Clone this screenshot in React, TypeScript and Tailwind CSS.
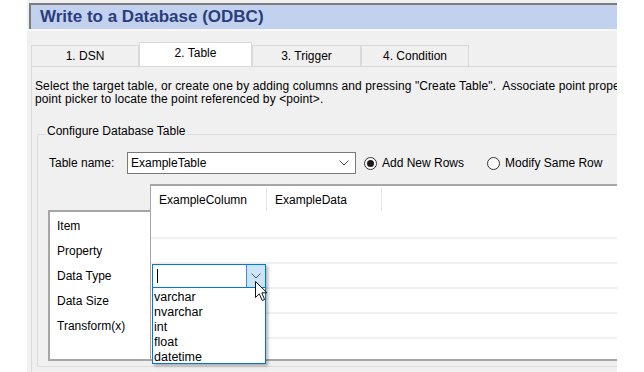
import React from 'react';

const tabs = [
  { label: '1. DSN', w: 'w-[108px]' },
  { label: '2. Table', w: 'w-[113px]', active: true },
  { label: '3. Trigger', w: 'w-[109px]' },
  { label: '4. Condition', w: 'w-[108px]' },
];

const rowLabels = ['Item', 'Property', 'Data Type', 'Data Size', 'Transform(x)'];
const dataTypes = ['varchar', 'nvarchar', 'int', 'float', 'datetime'];

const Chevron = ({ className = '' }: { className?: string }) => (
  <svg width="10" height="6" viewBox="0 0 10 6" className={className}>
    <polyline points="0.5,0.5 5,5 9.5,0.5" fill="none" stroke="#555" strokeWidth="1" />
  </svg>
);

const Radio = ({ checked, label }: { checked?: boolean; label: string }) => (
  <label className="flex items-center gap-[5px]">
    <span className="w-[13px] h-[13px] rounded-full border border-[#333] bg-white flex items-center justify-center">
      {checked && <span className="w-[7px] h-[7px] rounded-full bg-[#1a1a1a]" />}
    </span>
    <span>{label}</span>
  </label>
);

export default function App() {
  return (
    <div className="w-[644px] h-[372px] bg-white overflow-hidden text-[12px] text-black font-['Liberation_Sans',Arial,sans-serif]">
      <div className="ml-[27px] w-[590px] h-[372px] bg-[#f0f0f0] pt-[3px] overflow-hidden">
        {/* title bar */}
        <div className="ml-[2px] h-[26px] border-t-2 border-l-2 border-[#7c7c7c] bg-[#c2d2ee] pl-[9px] text-[17px] font-bold leading-[23px] text-[#2a3d7c]">
          Write to a Database (ODBC)
        </div>
        <div className="h-[2px] bg-[#f8f8f8]" />

        {/* tab strip */}
        <div className="mt-[11px] pl-[4px] flex items-end h-[24px]">
          {tabs.map((t) =>
            t.active ? (
              <div key={t.label} className={`${t.w} h-[24px] bg-white border border-b-0 border-[#d9d9d9] text-center leading-[21px]`}>
                {t.label}
              </div>
            ) : (
              <div key={t.label} className={`${t.w} h-[21px] bg-[#f0f0f0] border border-b-0 border-[#d9d9d9] text-center leading-[21px]`}>
                {t.label}
              </div>
            )
          )}
        </div>

        {/* tab page */}
        <div className="ml-[4px] h-[320px] border-l border-t border-[#d9d9d9] pl-[3px] pt-[13px] overflow-hidden">
          <p className="leading-[13px] whitespace-nowrap tracking-[0.1px]">
            Select the target table, or create one by adding columns and pressing "Create Table".&nbsp; Associate point properties with columns using the
            <br />
            point picker to locate the point referenced by &lt;point&gt;.
          </p>

          <fieldset className="mt-[18px] ml-[2px] w-[600px] border border-[#dcdcdc] rounded-[2px] pl-[10px] pb-[5px]">
            <legend className="ml-[-2px] px-[1px] leading-[14px] pb-[6px]">Configure Database Table</legend>

            <div className="mt-[8px] flex items-center h-[22px]">
              <span className="w-[79px] pl-[1px]">Table name:</span>
              <div className="w-[229px] h-[22px] bg-white border border-[#7a7a7a] flex items-center justify-between pl-[3px] pr-[6px]">
                <span>ExampleTable</span>
                <Chevron />
              </div>
              <div className="ml-[8px]">
                <Radio checked label="Add New Rows" />
              </div>
              <div className="ml-[23px]">
                <Radio label="Modify Same Row" />
              </div>
            </div>

            {/* grid */}
            <div className="mt-[10px] flex items-end">
              <div className="w-[102px] h-[151px] bg-white border-2 border-r-0 border-[#a6a6a6] pt-[2px] pl-[7px]">
                {rowLabels.map((l) => (
                  <div key={l} className="h-[25px] leading-[25px]">{l}</div>
                ))}
              </div>
              <div className="relative w-[480px] h-[177px] bg-white border-y-2 border-l border-[#a6a6a6]">
                <div className="flex h-[28px] border-b border-white">
                  <div className="w-[116px] pl-[8px] border-r border-[#e5e5e5] my-[2px] flex items-center">ExampleColumn</div>
                  <div className="w-[115px] pl-[8px] border-r border-[#e5e5e5] my-[2px] flex items-center">ExampleData</div>
                </div>
                {[0, 1, 2, 3, 4].map((i) => (
                  <div key={i} className="h-[25px] border-b-2 border-[#f0f0f0]" />
                ))}

                {/* open combo */}
                <div className="absolute left-[1px] top-[78px] w-[114px] shadow-[2px_2px_3px_rgba(0,0,0,0.3)]">
                  <div className="h-[24px] bg-white border border-[#0078d7] flex">
                    <div className="flex-1 flex items-center pl-[4px]">
                      <span className="w-px h-[14px] bg-black" />
                    </div>
                    <div className="w-[19px] bg-[#cce4f7] border-l border-[#3c8ee0] flex items-center justify-center">
                      <Chevron />
                    </div>
                  </div>
                  <div className="h-[76px] bg-white border border-t-0 border-[#0078d7] pl-[1px] pt-[2px] text-[12.5px]">
                    {dataTypes.map((d) => (
                      <div key={d} className="h-[15px] leading-[15px]">{d}</div>
                    ))}
                  </div>
                </div>

                {/* mouse pointer */}
                <svg className="absolute left-[104px] top-[95px]" width="14" height="21" viewBox="0 0 14 21">
                  <path d="M0.5 0.5 L0.5 16.5 L4.3 12.8 L7.2 19.5 L9.6 18.5 L6.8 11.8 L12 11.8 Z" fill="white" stroke="#111" strokeWidth="1" strokeLinejoin="round" />
                </svg>
              </div>
            </div>
          </fieldset>
        </div>
      </div>
    </div>
  );
}
